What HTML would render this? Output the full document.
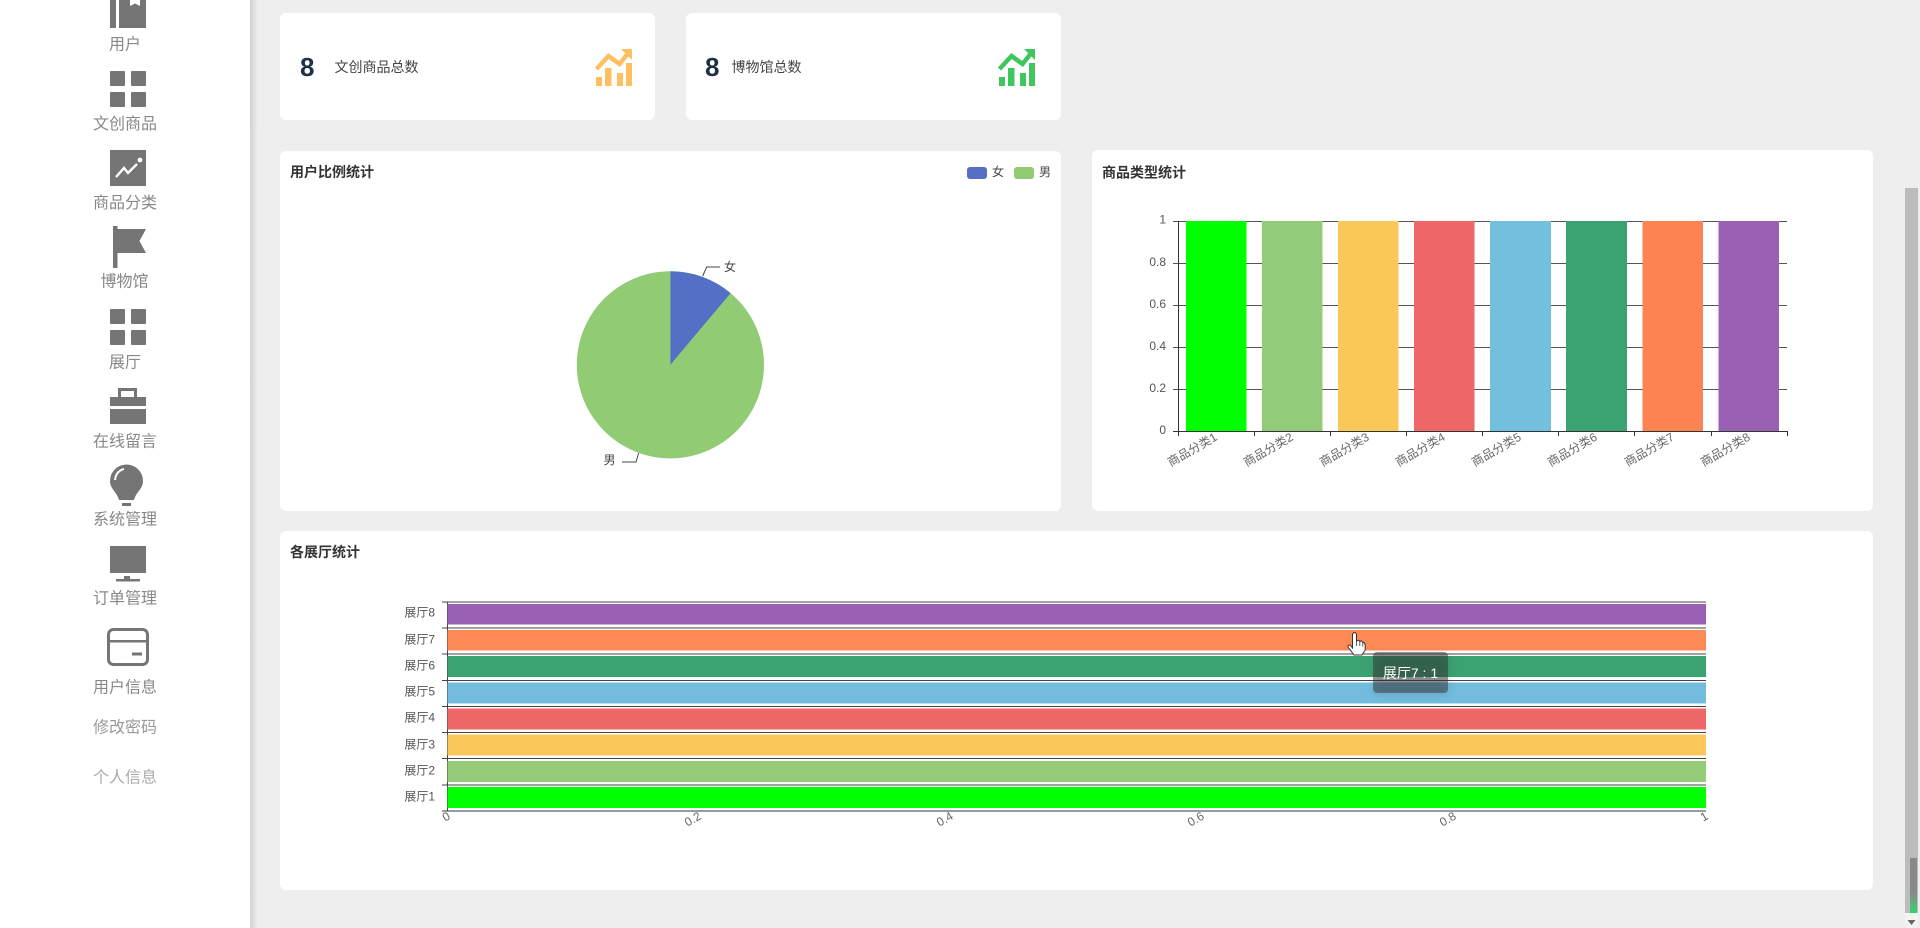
<!DOCTYPE html>
<html lang="zh">
<head>
<meta charset="utf-8">
<title>统计</title>
<style>
html,body{margin:0;padding:0;width:1920px;height:928px;overflow:hidden;background:#eeeeee}
svg{display:block;position:absolute;left:0;top:0;filter:blur(.35px)}
text{font-family:"Liberation Sans","Noto Sans CJK SC",sans-serif;dominant-baseline:central}
.side{font-size:16px;fill:#888;text-anchor:middle}
.title{font-size:14px;font-weight:700;fill:#333}
.tick{font-size:12px;fill:#666}
.ylab{font-size:12px;fill:#555;text-anchor:end}
.num{font-size:26px;font-weight:700;fill:#1f3044}
.cap{font-size:14px;fill:#444}
</style>
</head>
<body>
<svg width="1920" height="928" viewBox="0 0 1920 928" xmlns="http://www.w3.org/2000/svg" shape-rendering="geometricPrecision">
<defs>
<linearGradient id="sh" x1="0" x2="1" y1="0" y2="0"><stop offset="0" stop-color="#d2d2d2"/><stop offset="1" stop-color="#eeeeee"/></linearGradient>
<linearGradient id="gr" x1="0" x2="0" y1="0" y2="1"><stop offset="0" stop-color="#8a8a8a"/><stop offset="1" stop-color="#35d36a"/></linearGradient>
</defs>
<rect width="1920" height="928" fill="#eeeeee"/>

<!-- sidebar -->
<rect x="0" y="0" width="250" height="928" fill="#ffffff"/>
<rect x="250" y="0" width="8" height="928" fill="url(#sh)"/>
<g fill="#757575">
<rect x="110" y="0" width="6" height="28"/>
<path d="M119 0H130V6L135 3.5L140 6V0H146V28H119Z"/>
<rect x="110" y="71" width="15" height="15" rx="1"/><rect x="131" y="71" width="15" height="15" rx="1"/>
<rect x="110" y="92" width="15" height="15" rx="1"/><rect x="131" y="92" width="15" height="15" rx="1"/>
<rect x="110" y="150" width="36" height="36"/>
<rect x="113" y="226" width="4.5" height="42"/>
<path d="M117.5 229H146L139.5 241L146 253H117.5Z"/>
<rect x="110" y="309" width="15" height="15" rx="1"/><rect x="131" y="309" width="15" height="15" rx="1"/>
<rect x="110" y="330" width="15" height="15" rx="1"/><rect x="131" y="330" width="15" height="15" rx="1"/>
<path d="M118 397V388H137V397H134V391H121V397Z"/>
<rect x="110" y="397" width="36" height="9"/>
<rect x="110" y="409" width="36" height="15"/>
<path d="M110 481A16.5 16.5 0 0 1 143 481C143 489 136 492 134 500H119C117 492 110 489 110 481Z"/>
<rect x="122" y="503" width="9" height="3"/>
<rect x="110" y="546" width="36" height="27"/>
<rect x="124" y="576" width="6" height="4"/>
<rect x="116" y="579" width="24" height="2.5"/>
<rect x="132" y="652.5" width="10" height="3"/>
</g>
<path d="M116 177L124 168L128 173L137 164" fill="none" stroke="#fff" stroke-width="2.4"/>
<circle cx="140" cy="160" r="2.4" fill="#fff"/>
<path d="M115 480Q116 471 124 469" fill="none" stroke="#fff" stroke-width="2"/>
<rect x="108.5" y="629.5" width="39" height="35" rx="5" fill="none" stroke="#757575" stroke-width="3"/>
<rect x="108" y="640" width="40" height="2.5" fill="#757575"/>
<text class="side" x="125" y="45">用户</text>
<text class="side" x="125" y="124.500">文创商品</text>
<text class="side" x="125" y="203.500">商品分类</text>
<text class="side" x="124.500" y="282">博物馆</text>
<text class="side" x="125" y="363">展厅</text>
<text class="side" x="125" y="442">在线留言</text>
<text class="side" x="125" y="520">系统管理</text>
<text class="side" x="125" y="599">订单管理</text>
<text class="side" x="125" y="688">用户信息</text>
<text class="side" x="125" y="728" style="fill:#999">修改密码</text>
<text class="side" x="125" y="778" style="fill:#aaa">个人信息</text>

<!-- stat cards -->
<rect x="280" y="13" width="375" height="107" rx="6" fill="#fff"/>
<rect x="686" y="13" width="375" height="107" rx="6" fill="#fff"/>
<text class="num" x="300" y="67">8</text>
<text class="cap" x="334.500" y="67">文创商品总数</text>
<text class="num" x="705" y="67">8</text>
<text class="cap" x="731.500" y="67">博物馆总数</text>
<g fill="#fdbf60">
<rect x="596" y="77" width="6" height="9"/><rect x="605" y="68" width="6.500" height="18"/><rect x="617" y="73" width="6" height="13"/><rect x="626" y="63" width="6" height="23"/>
<path d="M621 49H632V60Z"/>
</g>
<path d="M596.500 69L608.500 56L619.500 64L629 52" fill="none" stroke="#fdbf60" stroke-width="4.500"/>
<g fill="#3fc65f">
<rect x="999" y="77" width="6" height="9"/><rect x="1008" y="68" width="6.500" height="18"/><rect x="1020" y="73" width="6" height="13"/><rect x="1029" y="63" width="6" height="23"/>
<path d="M1024 49H1035V60Z"/>
</g>
<path d="M999.500 69L1011.500 56L1022.500 64L1032 52" fill="none" stroke="#3fc65f" stroke-width="4.500"/>

<!-- pie chart card -->
<rect x="280" y="151" width="781" height="360" rx="6" fill="#fff"/>
<text class="title" x="290" y="172">用户比例统计</text>
<rect x="967" y="167" width="20" height="12" rx="3" fill="#5470c6"/>
<text class="tick" x="992" y="172" style="fill:#444">女</text>
<rect x="1014" y="167" width="20" height="12" rx="3" fill="#91cc75"/>
<text class="tick" x="1039" y="172" style="fill:#444">男</text>
<circle cx="670.400" cy="364.800" r="93.600" fill="#91cc75"/>
<path d="M670.400 364.800V271.200A93.600 93.600 0 0 1 730.600 293.100Z" fill="#5470c6"/>
<path d="M702.700 276L706.700 267H720" fill="none" stroke="#444" stroke-width="1"/>
<path d="M638.700 453L636 462H622" fill="none" stroke="#444" stroke-width="1"/>
<text class="tick" x="724" y="267" style="fill:#444">女</text>
<text class="tick" x="603.500" y="460" style="fill:#444">男</text>

<!-- bar chart card -->
<rect x="1092" y="150" width="781" height="361" rx="6" fill="#fff"/>
<text class="title" x="1102" y="172.500">商品类型统计</text>
<g stroke="#555" stroke-width="1" fill="none">
<path d="M1173 221.500H1787M1173 263.500H1787M1173 305.500H1787M1173 347.500H1787M1173 389.500H1787"/>
</g>
<g stroke="#333" stroke-width="1" fill="none">
<path d="M1173 431.500H1787M1178.500 221V436M1254.500 431V436M1330.500 431V436M1406.500 431V436M1482.500 431V436M1558.500 431V436M1634.500 431V436M1711.500 431V436M1787.500 431V436"/>
</g>
<rect x="1186" y="221" width="60.500" height="210" fill="#00ff00"/>
<rect x="1262" y="221" width="60.500" height="210" fill="#93cc79"/>
<rect x="1338" y="221" width="60.500" height="210" fill="#fac858"/>
<rect x="1414" y="221" width="60.500" height="210" fill="#ee6666"/>
<rect x="1490" y="221" width="61" height="210" fill="#73c0de"/>
<rect x="1566" y="221" width="61" height="210" fill="#3ba272"/>
<rect x="1642.500" y="221" width="60.500" height="210" fill="#fc8452"/>
<rect x="1718.500" y="221" width="60.500" height="210" fill="#9a60b4"/>
<text class="ylab" x="1166" y="219.500">1</text>
<text class="ylab" x="1166" y="262">0.8</text>
<text class="ylab" x="1166" y="304">0.6</text>
<text class="ylab" x="1166" y="346">0.4</text>
<text class="ylab" x="1166" y="388">0.2</text>
<text class="ylab" x="1166" y="430">0</text>
<text class="tick" text-anchor="end" transform="translate(1216 436) rotate(-30)">商品分类1</text>
<text class="tick" text-anchor="end" transform="translate(1292 436) rotate(-30)">商品分类2</text>
<text class="tick" text-anchor="end" transform="translate(1368 436) rotate(-30)">商品分类3</text>
<text class="tick" text-anchor="end" transform="translate(1444 436) rotate(-30)">商品分类4</text>
<text class="tick" text-anchor="end" transform="translate(1520 436) rotate(-30)">商品分类5</text>
<text class="tick" text-anchor="end" transform="translate(1596 436) rotate(-30)">商品分类6</text>
<text class="tick" text-anchor="end" transform="translate(1673 436) rotate(-30)">商品分类7</text>
<text class="tick" text-anchor="end" transform="translate(1749 436) rotate(-30)">商品分类8</text>

<!-- horizontal chart card -->
<rect x="280" y="531" width="1593" height="359" rx="6" fill="#fff"/>
<text class="title" x="290" y="552">各展厅统计</text>
<g stroke="#444" stroke-width="1" fill="none">
<path d="M442 602H1706M442 628H1706M442 654H1706M442 680.500H1706M442 706.500H1706M442 732.500H1706M442 758.500H1706M442 785H1706"/>
<path d="M442 811H1706" stroke="#2a3a4a"/>
<path d="M447.500 602V811"/>
</g>
<rect x="447.500" y="604" width="1258.500" height="20.500" fill="#9a60b4"/>
<rect x="447.500" y="630" width="1258.500" height="20.500" fill="#fd8a55"/>
<rect x="447.500" y="656" width="1258.500" height="21" fill="#3ba272"/>
<rect x="447.500" y="682.500" width="1258.500" height="21" fill="#73bcdd"/>
<rect x="447.500" y="708.500" width="1258.500" height="21" fill="#ee6666"/>
<rect x="447.500" y="734.500" width="1258.500" height="21" fill="#fcc75a"/>
<rect x="447.500" y="761" width="1258.500" height="21" fill="#95cc79"/>
<rect x="447.500" y="787" width="1258.500" height="21" fill="#00ff00"/>
<text class="ylab" x="435" y="612.500">展厅8</text>
<text class="ylab" x="435" y="639.500">展厅7</text>
<text class="ylab" x="435" y="665.500">展厅6</text>
<text class="ylab" x="435" y="691.500">展厅5</text>
<text class="ylab" x="435" y="717.500">展厅4</text>
<text class="ylab" x="435" y="744.500">展厅3</text>
<text class="ylab" x="435" y="770.500">展厅2</text>
<text class="ylab" x="435" y="796.500">展厅1</text>
<text class="tick" text-anchor="end" transform="translate(449 815) rotate(-30)">0</text>
<text class="tick" text-anchor="end" transform="translate(700 815) rotate(-30)">0.2</text>
<text class="tick" text-anchor="end" transform="translate(952 815) rotate(-30)">0.4</text>
<text class="tick" text-anchor="end" transform="translate(1203 815) rotate(-30)">0.6</text>
<text class="tick" text-anchor="end" transform="translate(1455 815) rotate(-30)">0.8</text>
<text class="tick" text-anchor="end" transform="translate(1707 815) rotate(-30)">1</text>

<!-- tooltip -->
<rect x="1373" y="652" width="75" height="41" rx="4" fill="rgba(50,50,50,.5)" style="filter:drop-shadow(1px 2px 4px rgba(0,0,0,.2))"/>
<text x="1410.500" y="673" font-size="14" fill="#fff" text-anchor="middle">展厅7 : 1</text>

<!-- cursor -->
<path d="M1352.500 645V634Q1354.500 631 1356.500 634V641Q1358.500 639.500 1359.800 641.500Q1361.800 640 1362.800 642.500Q1364.800 642 1365.200 645V650L1362 655H1354L1348 647Q1348 644 1350.500 645.500L1352.500 648Z" fill="#fff" stroke="#333" stroke-width="1"/>
<path d="M1356.500 641V646M1359.800 641.500V646M1362.800 642.500V646.500" stroke="#333" stroke-width=".8" fill="none"/>

<!-- scrollbar -->
<rect x="1905" y="188" width="13" height="725" fill="#bcbcbc"/>
<rect x="1905" y="913" width="13" height="15" fill="#f3f3f3"/>
<rect x="1910" y="858" width="7" height="55" fill="#888"/>
<rect x="1910" y="893" width="7" height="20" fill="url(#gr)"/>
<path d="M1907.500 920H1915.500L1911.500 925Z" fill="#666"/>
</svg>
</body>
</html>
